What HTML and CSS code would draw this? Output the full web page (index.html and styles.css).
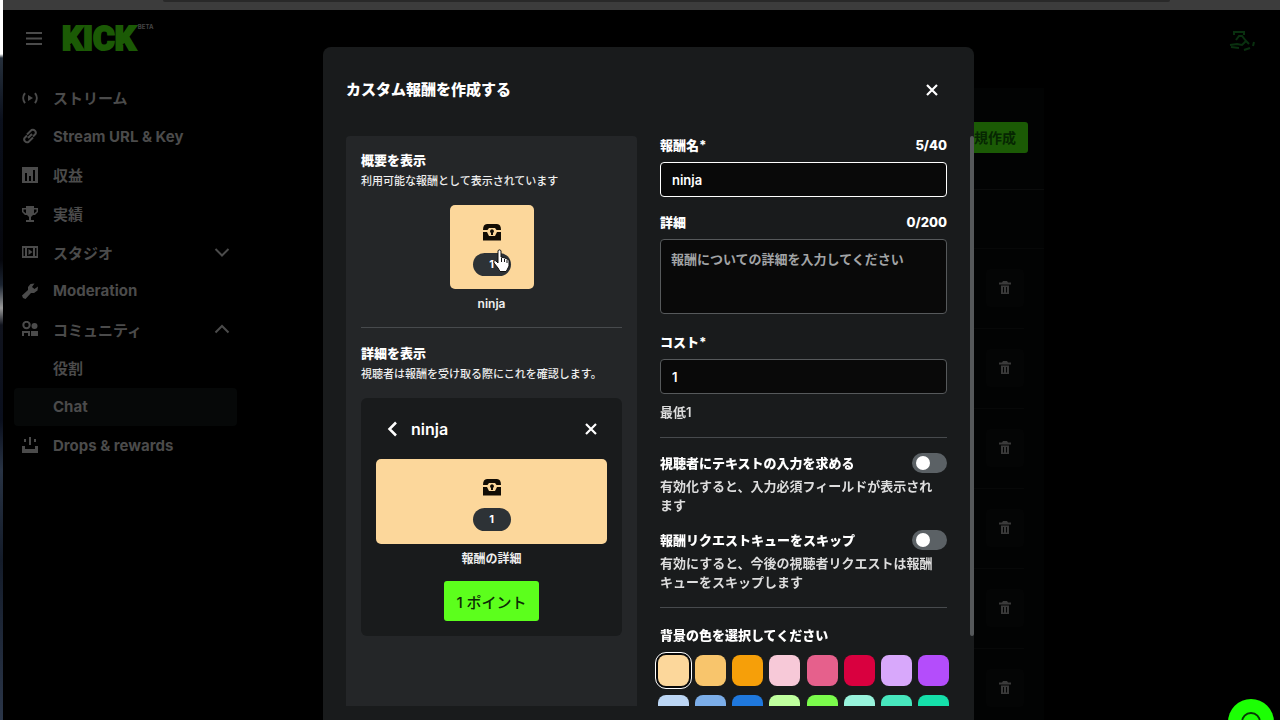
FILE: index.html
```html
<!DOCTYPE html>
<html lang="ja">
<head>
<meta charset="utf-8">
<meta name="viewport" content="width=device-width, initial-scale=1">
<title>カスタム報酬を作成する</title>
<link rel="stylesheet" href="styles.css">
</head>
<body>
<svg class="defs" aria-hidden="true">
  <symbol id="chest" viewBox="0 0 18 18">
    <path d="M4 1h10q4 0 4 6h-4.500L12 5H6L4.500 7H0q0-6 4-6z"/>
    <path d="M0 9h4l2 4h6l2-4h4v8.500H0z"/>
    <path d="M9 6.300a2 2 0 0 1 1 3.700v2H8v-2A2 2 0 0 1 9 6.300z"/>
  </symbol>
  <symbol id="close" viewBox="0 0 14 14"><path d="M2 2l10 10M12 2L2 12" fill="none" stroke="currentColor" stroke-width="2.200"/></symbol>
  <symbol id="trash" viewBox="0 0 12 14"><path d="M4 0h4l1 1.500h3V3.500H0V1.500h3zM2 4.500h8V13H2zm2 1.500v5.500h1V6zm3 0v5.500h1V6z" fill-rule="evenodd"/></symbol>
</svg>

<div class="screen">
  <div class="edge" aria-hidden="true"></div>
  <div class="window">
    <div class="browser-bar"><div class="browser-tab"></div></div>
    <header class="topbar">
      <button class="plain menu" aria-label="メニュー"><svg viewBox="0 0 16 13"><path d="M0 0h16v2H0zM0 5.500h16v2H0zM0 11h16v2H0z"/></svg></button>
      <a class="logo" href="#">KICK<sup class="beta">BETA</sup></a>
      <svg class="avatar" viewBox="0 0 28 28" aria-hidden="true"><path d="M7 11V8h10v3M9 16l3-4h3l4 5M3 21l7-1 5 1 4-4 3 3M4 23l8 1M17 26l6-2M27 18l-1 4" fill="none" stroke="#09300f" stroke-width="2"/></svg>
    </header>
    <div class="layout">
      <nav class="sidebar">
        <ul class="nav">
          <li><a href="#"><svg viewBox="0 0 16 16"><path d="M6 5l5 3-5 3z"/><path d="M3 3a8 8 0 0 0 0 10M13 3a8 8 0 0 1 0 10" class="line"/></svg>ストリーム</a></li>
          <li><a href="#"><svg viewBox="0 0 16 16"><path d="M5 7.500l-2.500 2.500a3 3 0 0 0 4 4L11 9.500M11 8.500l2.500-2.500a3 3 0 0 0-4-4L5 6.500M6 10l4-4" class="line"/></svg>Stream URL &amp; Key</a></li>
          <li><a href="#"><svg viewBox="0 0 16 16"><path d="M0 0h16v16H0zm3 6v8h2V6zm4 3v5h2V9zm4-6v11h2V3z" fill-rule="evenodd"/></svg>収益</a></li>
          <li><a href="#"><svg viewBox="0 0 16 16"><path d="M4 0h8v2h4v4l-3 3h-2l-2 2v3h3v2H4v-2h3v-3L5 9H3L0 6V2h4zM1.500 3.500v2L4 7.500v-4zM12 3.500v4l2.500-2v-2z" fill-rule="evenodd"/></svg>実績</a></li>
          <li><a href="#"><svg viewBox="0 0 16 16"><path d="M0 2h16v12H0zm1.500 2v8H3V4zM5 4v8h6V4zm8 0v8h1.500V4zM6.500 5l4 3-4 3z" fill-rule="evenodd"/></svg>スタジオ<svg class="chevron" viewBox="0 0 16 16"><path d="M1.500 5L8 11.500 14.500 5" class="line"/></svg></a></li>
          <li><a href="#"><svg viewBox="0 0 16 16"><path d="M12.500.5L8.500 1 6 4v3L0 12.500 1 15l2.500 1L9 10h3l3.500-2.500.5-4L12.500 6 10 4z"/></svg>Moderation</a></li>
          <li><a href="#"><svg viewBox="0 0 16 16"><circle cx="4.500" cy="4" r="3.200" class="line"/><circle cx="12.500" cy="5" r="3"/><path d="M1 15v-4h6v4" class="line"/><path d="M9 15v-5h7v5z"/></svg>コミュニティ<svg class="chevron" viewBox="0 0 16 16"><path d="M1.500 11.500L8 5l6.500 6.500" class="line"/></svg></a></li>
          <li><a class="sub" href="#">役割</a></li>
          <li><a class="sub current" href="#" aria-current="page">Chat</a></li>
          <li><a href="#"><svg viewBox="0 0 16 16"><path d="M7 0h2v8H7zM2 2h2v3H2zM12 2h2v3h-2zM0 9h3v3h10V9h3v7H0z"/></svg>Drops &amp; rewards</a></li>
        </ul>
      </nav>
      <main class="content">
        <section class="rewards">
          <div class="rewards-head"><button class="create">新規作成</button></div>
          <div class="rewards-columns"></div>
          <ul class="rows">
            <li><button class="delete" aria-label="削除"><svg><use href="#trash"/></svg></button></li>
            <li><button class="delete" aria-label="削除"><svg><use href="#trash"/></svg></button></li>
            <li><button class="delete" aria-label="削除"><svg><use href="#trash"/></svg></button></li>
            <li><button class="delete" aria-label="削除"><svg><use href="#trash"/></svg></button></li>
            <li><button class="delete" aria-label="削除"><svg><use href="#trash"/></svg></button></li>
            <li><button class="delete" aria-label="削除"><svg><use href="#trash"/></svg></button></li>
          </ul>
        </section>
      </main>
    </div>
  </div>
</div>

<div class="overlay">
  <div class="modal" role="dialog" aria-modal="true" aria-labelledby="modal-title">
    <div class="modal-head">
      <h1 id="modal-title">カスタム報酬を作成する</h1>
      <button class="plain" aria-label="閉じる"><svg class="x"><use href="#close"/></svg></button>
    </div>
    <div class="modal-body">
      <section class="preview">
        <h2>概要を表示</h2>
        <p class="hint">利用可能な報酬として表示されています</p>
        <div class="tile small">
          <svg class="chest"><use href="#chest"/></svg>
          <span class="cost">1</span>
          <svg class="cursor" viewBox="0 0 18 24" aria-hidden="true"><path d="M5 2c0-1.500 3-1.500 3 0v6l2 .5 2 .5 2 1 2 1v6l-2 4-1 1.500H7L5 19l-4-5c-1-2 1-3 2-2l2 2z" fill="#fff" stroke="#111" /><path d="M8.500 9v4M11.500 10v3M14 11v3" stroke="#111"/></svg>
        </div>
        <p class="tile-name">ninja</p>
        <hr>
        <h2>詳細を表示</h2>
        <p class="hint">視聴者は報酬を受け取る際にこれを確認します。</p>
        <div class="card">
          <div class="card-head">
            <button class="plain" aria-label="戻る"><svg class="back" viewBox="0 0 12 16"><path d="M10 1.500L3.500 8l6.500 6.500" fill="none" stroke="currentColor" stroke-width="2.500"/></svg></button>
            <h3>ninja</h3>
            <button class="plain" aria-label="閉じる"><svg class="x"><use href="#close"/></svg></button>
          </div>
          <div class="tile">
            <svg class="chest"><use href="#chest"/></svg>
            <span class="cost">1</span>
          </div>
          <p class="tile-name">報酬の詳細</p>
          <button class="redeem">1 ポイント</button>
        </div>
      </section>

      <form class="form">
        <div class="label-row"><label for="name">報酬名*</label><span>5/40</span></div>
        <input class="field active" id="name" type="text" value="ninja">
        <div class="label-row spaced"><label for="detail">詳細</label><span>0/200</span></div>
        <textarea class="field area" id="detail" placeholder="報酬についての詳細を入力してください"></textarea>
        <div class="label-row spaced"><label for="cost">コスト*</label></div>
        <input class="field" id="cost" type="text" inputmode="numeric" value="1">
        <p class="minimum">最低1</p>
        <hr>
        <div class="label-row"><label for="ask">視聴者にテキストの入力を求める</label><input class="toggle" id="ask" type="checkbox" role="switch"></div>
        <p class="desc">有効化すると、入力必須フィールドが表示され<br>ます</p>
        <div class="label-row second"><label for="skip">報酬リクエストキューをスキップ</label><input class="toggle" id="skip" type="checkbox" role="switch"></div>
        <p class="desc">有効にすると、今後の視聴者リクエストは報酬<br>キューをスキップします</p>
        <hr>
        <fieldset>
          <legend>背景の色を選択してください</legend>
          <div class="swatches">
            <input type="radio" name="bg" class="c1" aria-label="ピーチ" checked>
            <input type="radio" name="bg" class="c2" aria-label="アプリコット">
            <input type="radio" name="bg" class="c3" aria-label="オレンジ">
            <input type="radio" name="bg" class="c4" aria-label="ライトピンク">
            <input type="radio" name="bg" class="c5" aria-label="ピンク">
            <input type="radio" name="bg" class="c6" aria-label="レッド">
            <input type="radio" name="bg" class="c7" aria-label="ラベンダー">
            <input type="radio" name="bg" class="c8" aria-label="パープル">
            <input type="radio" name="bg" class="c9" aria-label="ライトブルー">
            <input type="radio" name="bg" class="c10" aria-label="スカイブルー">
            <input type="radio" name="bg" class="c11" aria-label="ブルー">
            <input type="radio" name="bg" class="c12" aria-label="ライトグリーン">
            <input type="radio" name="bg" class="c13" aria-label="グリーン">
            <input type="radio" name="bg" class="c14" aria-label="ミント">
            <input type="radio" name="bg" class="c15" aria-label="ターコイズ">
            <input type="radio" name="bg" class="c16" aria-label="エメラルド">
          </div>
        </fieldset>
      </form>
      <div class="scroll-thumb" aria-hidden="true"></div>
    </div>
  </div>
</div>

<button class="help" aria-label="ヘルプ"><svg viewBox="0 0 24 24"><circle cx="12" cy="12" r="9" fill="none" stroke="#063b06" stroke-width="2"/></svg></button>
</body>
</html>
```
FILE: styles.css
```css
* { box-sizing: border-box; }

body {
  margin: 0;
  height: 100vh;
  overflow: hidden;
  background: #000;
  color: #fff;
  font-family: Inter, "Noto Sans CJK JP", sans-serif;
  font-size: 13px;
}

h1, h2, h3, p, ul, fieldset, legend { margin: 0; padding: 0; border: 0; }
ul { list-style: none; }
button, input, textarea { font: inherit; }
button { border: 0; padding: 0; cursor: pointer; }
svg { display: block; fill: currentColor; }
.defs { display: none; }

.plain { display: flex; background: none; color: inherit; }

/* Dimmed page */
.screen { display: flex; height: 100vh; }
.edge {
  width: 3px;
  background: linear-gradient(#fff 0 54px, #26303c 58px, #0b101c 120px, #05060c 260px, #1b2431 285px, #9a9a9a 308px, #10131d 325px, #0a0f1d 420px, #283344 470px, #141c2a 560px, #2a3548);
}
.window { flex: 1; min-width: 0; display: flex; flex-direction: column; color: #4b4b4b; }
.browser-bar { height: 10px; background: #3c3c3c; flex: none; }
.browser-tab { height: 2px; margin: 0 110px 0 160px; background: #292929; border-radius: 0 0 4px 4px; }

.topbar { display: flex; align-items: center; height: 56px; flex: none; padding: 0 25px 0 23px; }
.menu svg { width: 16px; height: 13px; }
.logo {
  display: flex;
  align-items: flex-start;
  margin-left: 20px;
  padding-top: 2px;
  color: #1b5a05;
  font: 900 33px/32px Roboto, sans-serif;
  text-decoration: none;
  -webkit-text-stroke: 2px #1b5a05;
}
.beta {
  margin: 0 0 0 2px;
  color: #444;
  font: 700 6px/8px Inter, sans-serif;
  -webkit-text-stroke: 0;
}
.avatar { width: 28px; height: 28px; margin-left: auto; }

.layout { display: flex; flex: 1; min-height: 0; }
.sidebar { width: 246px; flex: none; padding: 13px 12px 0 11px; }
.nav { display: grid; grid-auto-rows: 1fr; height: 386px; }
.nav a {
  display: flex;
  align-items: center;
  gap: 15px;
  height: 100%;
  padding: 0 7px 1px 8px;
  border-radius: 4px;
  color: inherit;
  font-size: 15px;
  font-weight: 700;
  text-decoration: none;
}
.nav svg { width: 16px; height: 16px; }
.nav .line { fill: none; stroke: currentColor; stroke-width: 2; }
.nav .chevron { margin-left: auto; }
.nav .sub { padding-left: 39px; }
.nav .current { background: #060808; }

.content { flex: 1; padding: 22px 236px 0 80px; }
.rewards { height: 100%; background: #020303; overflow: hidden; }
.rewards-head {
  display: flex;
  align-items: center;
  justify-content: flex-end;
  height: 102px;
  padding: 0 16px 2px 0;
  border-bottom: 1px solid #0b0c0c;
}
.create {
  height: 31px;
  padding: 0 12px;
  border-radius: 3px;
  background: #1b5a05;
  color: #062602;
  font-size: 14px;
  line-height: 20px;
  font-weight: 600;
}
.rewards-columns { height: 59px; border-bottom: 1px solid #070808; }
.rows { padding-right: 20px; }
.rows li {
  display: flex;
  align-items: center;
  justify-content: flex-end;
  height: 80px;
  padding-bottom: 1px;
  border-bottom: 1px solid #070808;
}
.delete {
  display: grid;
  place-items: center;
  width: 38px;
  height: 38px;
  border-radius: 4px;
  background: #040505;
  color: #3a3a3a;
}
.delete svg { width: 12px; height: 14px; }

/* Dialog */
.overlay {
  position: fixed;
  inset: 0;
  display: flex;
  justify-content: center;
  padding: 47px 0 0 17px;
}
.modal {
  display: flex;
  flex-direction: column;
  width: 651px;
  max-width: 100%;
  padding-bottom: 14px;
  border-radius: 8px 8px 0 0;
  background: #191b1c;
}
.modal-head {
  display: flex;
  align-items: center;
  justify-content: space-between;
  flex: none;
  height: 89px;
  padding: 0 35px 4px 23px;
}
h1 { font-size: 15px; line-height: 20px; font-weight: 800; }
.x { width: 14px; height: 14px; }
.modal-body {
  display: grid;
  grid-template-columns: minmax(0, 291fr) minmax(0, 287fr) 4px;
  column-gap: 23px;
  flex: 1;
  min-height: 0;
  padding-left: 23px;
  overflow: hidden;
}
.scroll-thumb { height: 500px; border-radius: 2px; background: #55585a; }
hr { width: 100%; height: 1px; margin: 0; border: 0; background: #474a4d; }

.preview {
  display: flex;
  flex-direction: column;
  padding: 15px;
  border-radius: 4px 4px 0 0;
  background: #242628;
}
h2 { font-size: 13px; line-height: 19px; font-weight: 800; }
.hint { font-size: 11px; line-height: 22px; font-weight: 500; color: #eee; white-space: nowrap; }
.preview hr { margin: 13px 0 16px; }
.tile {
  display: flex;
  flex-direction: column;
  align-items: center;
  justify-content: flex-end;
  gap: 12px;
  width: 100%;
  height: 85px;
  padding-bottom: 13px;
  border-radius: 5px;
  background: #fcd79b;
  color: #120d05;
}
.tile.small { position: relative; align-self: center; width: 84px; height: 84px; margin-top: 13px; }
.chest { width: 18px; height: 18px; }
.cost {
  width: 38px;
  border-radius: 12px;
  background: #2d3236;
  color: #fff;
  font-size: 11px;
  line-height: 23px;
  font-weight: 700;
  text-align: center;
}
.cursor { position: absolute; left: 43px; top: 44px; width: 18px; height: 24px; }
.tile-name { margin-top: 5px; font-size: 12px; line-height: 20px; font-weight: 600; text-align: center; color: #eee; }

.card {
  display: flex;
  flex-direction: column;
  margin-top: 13px;
  padding: 15px;
  border-radius: 6px;
  background: #191b1c;
}
.card-head { display: flex; align-items: center; gap: 13px; height: 31px; margin-bottom: 15px; padding: 0 9px 0 10px; }
.card-head h3 { flex: 1; font-size: 16px; font-weight: 600; }
.back { width: 12px; height: 16px; }
.redeem {
  align-self: center;
  height: 40px;
  margin-top: 12px;
  padding: 0 12px;
  border-radius: 3px;
  background: #5cff1c;
  color: #0c2b05;
  font-size: 15px;
  font-weight: 500;
}

.label-row { display: flex; align-items: center; justify-content: space-between; height: 18px; line-height: 18px; font-weight: 800; }
.label-row.spaced { margin-top: 16px; }
.area + .label-row.spaced { margin-top: 19px; }
.field {
  display: block;
  width: 100%;
  height: 35px;
  margin-top: 8px;
  padding: 0 11px;
  border: 1px solid #56595b;
  border-radius: 4px;
  background: #090909;
  color: #fff;
  font-weight: 600;
  outline: 0;
}
.field.active { border-color: #fff; }
.area { height: 75px; padding: 9px 10px; line-height: 20px; resize: none; }
.field + .minimum { margin-top: 8px; line-height: 20px; font-weight: 600; color: #ddd; }
.area::placeholder { color: #a2a4a6; opacity: 1; }
.form hr { margin: 15px 0 16px; }
.label-row.second { margin-top: 16px; }
.desc { margin-top: 5px; line-height: 19px; font-weight: 600; color: #ddd; }
.desc + hr { margin-bottom: 17px; }
.toggle {
  appearance: none;
  width: 35px;
  height: 20px;
  margin: 0;
  padding: 3px 4px;
  border-radius: 10px;
  background: #5b6165;
}
.toggle::before { content: ""; display: block; width: 14px; height: 14px; border-radius: 50%; background: #fff; }
.toggle:checked::before { margin-left: auto; }

legend { line-height: 20px; font-weight: 800; }
.swatches {
  display: grid;
  grid-template-columns: repeat(8, 31px);
  justify-content: space-between;
  row-gap: 9px;
  margin: 10px -2px 0;
}
.swatches input { appearance: none; width: 31px; height: 31px; margin: 0; border-radius: 8px; }
.swatches input:checked { outline: 1px solid #fff; outline-offset: 2px; box-shadow: 0 0 0 2px #090909; }
.c1 { background: #fcd79b; }
.c2 { background: #f8c56c; }
.c3 { background: #f69f09; }
.c4 { background: #f7c9d8; }
.c5 { background: #e6608c; }
.c6 { background: #d9003f; }
.c7 { background: #d8a8fb; }
.c8 { background: #b44dfb; }
.c9 { background: #bcd6f4; }
.c10 { background: #7bade8; }
.c11 { background: #1f78dd; }
.c12 { background: #bfff9e; }
.c13 { background: #7bfb4c; }
.c14 { background: #98f3dc; }
.c15 { background: #47e6bd; }
.c16 { background: #15e0aa; }

.help {
  position: fixed;
  right: 6px;
  bottom: -25px;
  display: grid;
  place-items: start center;
  width: 46px;
  height: 46px;
  padding-top: 11px;
  border-radius: 50%;
  background: #1cff04;
}
.help svg { width: 24px; height: 24px; }
```
